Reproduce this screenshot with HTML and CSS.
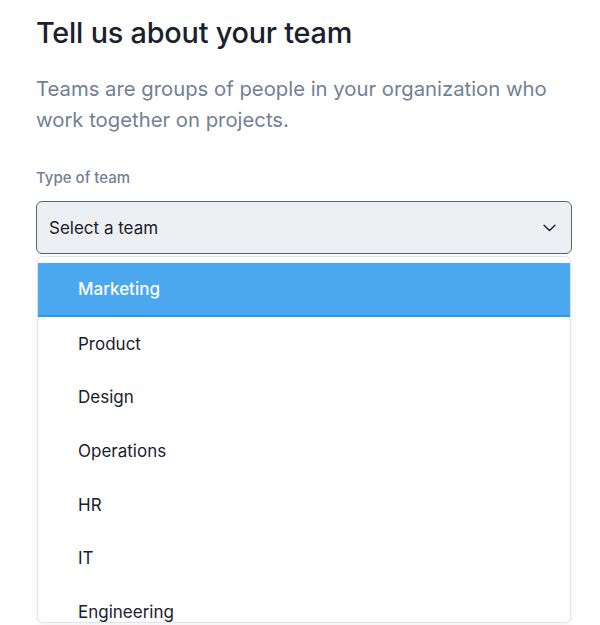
FILE: index.html
```html
<!DOCTYPE html>
<html lang="en">
<head>
<meta charset="utf-8">
<link rel="stylesheet" href="styles.css">
</head>
<body>
<main class="page">
  <h1 class="title">Tell us about your team</h1>
  <p class="lead">Teams are groups of people in your organization who work together on projects.</p>
  <div class="field">
    <label class="label">Type of team</label>
    <div class="select">
      <span class="select-text">Select a team</span>
      <svg class="chevron" width="13" height="8" viewBox="0 0 13 8"><path d="M1 1.2l5.5 5.3 5.5-5.3" fill="none" stroke="#1a202c" stroke-width="1.4" stroke-linecap="round" stroke-linejoin="round"/></svg>
    </div>
    <ul class="menu">
      <li class="option active">Marketing</li>
      <li class="option">Product</li>
      <li class="option">Design</li>
      <li class="option">Operations</li>
      <li class="option">HR</li>
      <li class="option">IT</li>
      <li class="option">Engineering</li>
    </ul>
  </div>
</main>
</body>
</html>
```
FILE: styles.css
```css
html, body {
  margin: 0;
  padding: 0;
  background: #ffffff;
}
body {
  font-family: Inter, "Liberation Sans", Arial, sans-serif;
  color: #1a202c;
}
.page {
  padding: 14px 20px 0 36px;
  height: 625px;
  box-sizing: border-box;
  overflow: hidden;
}
.title {
  margin: 0;
  font-size: 28.8px;
  line-height: 38px;
  font-weight: 500;
  letter-spacing: -0.2px;
  color: #1a202c;
}
.lead {
  margin: 21px 0 0;
  font-size: 20.3px;
  line-height: 31px;
  color: #718096;
  max-width: 540px;
}
.field {
  margin-top: 33px;
}
.label {
  display: block;
  font-size: 15px;
  line-height: 20px;
  font-weight: 500;
  color: #718096;
}
.select {
  margin-top: 13px;
  margin-right: 8px;
  height: 53px;
  box-sizing: border-box;
  border: 1px solid #5a6473;
  border-radius: 6px;
  background: #edf0f2;
  display: flex;
  align-items: center;
  justify-content: space-between;
  padding: 0 15px 0 12px;
}
.select-text {
  font-size: 17px;
  color: #1a202c;
}
.menu {
  list-style: none;
  margin: 2px 9px 0 1px;
  padding: 6px 0 0;
  border: 1px solid #dfe3e8;
  border-radius: 6px;
  background: #fff;
  box-shadow: 0 2px 8px rgba(0,0,0,0.06);
  height: 367px;
  box-sizing: border-box;
  overflow: hidden;
}
.option {
  height: 53.7px;
  display: flex;
  align-items: center;
  padding-left: 40px;
  font-size: 17px;
  color: #1a202c;
  box-sizing: border-box;
}
.option.active {
  background: #4ca8ee;
  color: #ffffff;
  font-weight: 500;
  border-bottom: 2px solid #1a9ef5;
}
```
